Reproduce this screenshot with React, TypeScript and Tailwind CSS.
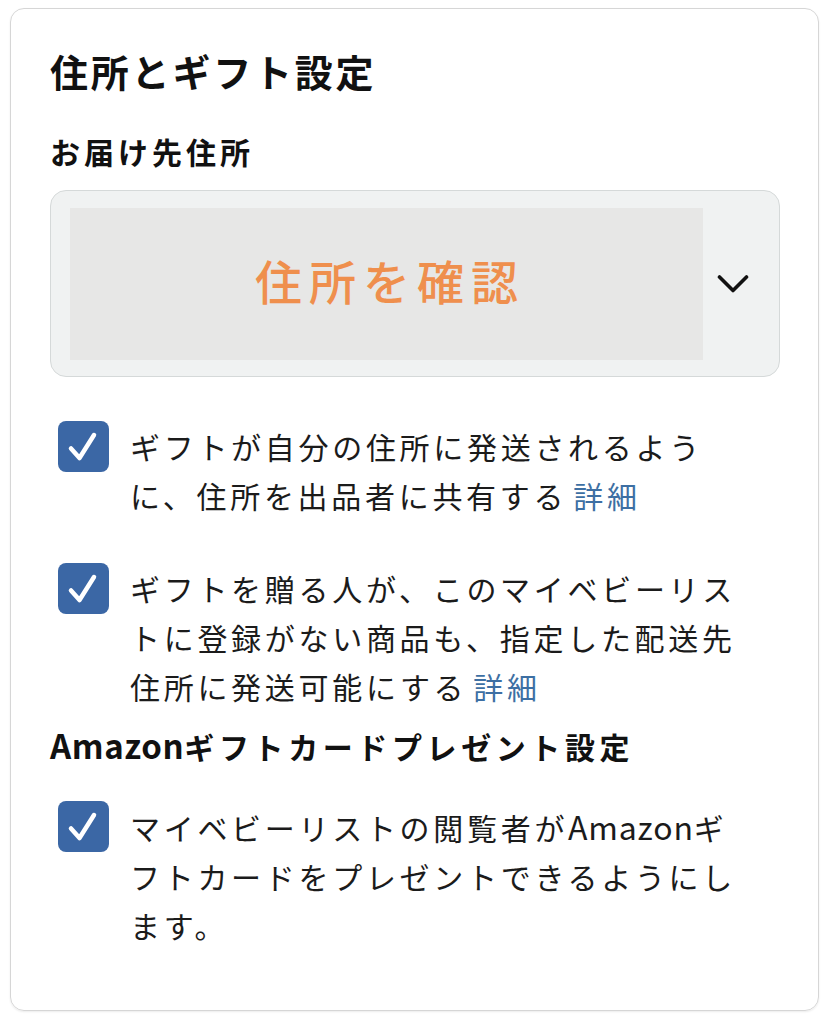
import React from "react";

const font = { fontFamily: '"Noto Sans CJK JP", "Noto Sans", sans-serif' };

function Check() {
  return (
    <div className="w-[51px] h-[51px] shrink-0 rounded-[8px] bg-[#3b67a5] flex items-center justify-center">
      <svg width="51" height="51" viewBox="0 0 51 51" fill="none">
        <path d="M13 27.5 L21.5 37 L36 14" stroke="white" strokeWidth="4.5" strokeLinecap="round" strokeLinejoin="round" />
      </svg>
    </div>
  );
}

function Item({ lines, link, className = "" }: { lines: React.ReactNode[]; link?: boolean; className?: string }) {
  return (
    <div className={"flex items-start ml-[8px] gap-[21px] " + className}>
      <Check />
      <div className="mt-[1px] text-[30px] leading-[49px] tracking-[3.7px] text-[#1b1b1b]">
        {lines.map((l, i) => (
          <div key={i} className="whitespace-nowrap">
            {l}
            {link && i === lines.length - 1 && (
              <span className="text-[#3d6fa3] ml-[6px]">詳細</span>
            )}
          </div>
        ))}
      </div>
    </div>
  );
}

export default function App() {
  return (
    <div className="w-[831px] h-[1024px] bg-white pt-[8px] pl-[10px] pr-[12px]" style={font}>
      <div className="h-[1003px] rounded-[14px] border border-[#d6d6d6] shadow-[0_1px_2px_rgba(0,0,0,0.08)] pl-[39px] pr-[38px] pt-[38px]">
        <div className="text-[38px] leading-[48px] font-bold tracking-[2.8px] text-[#111]">住所とギフト設定</div>
        <div className="mt-[36px] text-[30px] leading-[40px] font-bold tracking-[4px] text-[#111]">お届け先住所</div>
        <div className="mt-[19px] h-[187px] rounded-[16px] border border-[#d5d9d9] bg-[#f0f2f2] flex items-center pl-[19px] pr-[30px]">
          <div className="w-[633px] h-[152px] bg-[#e7e7e6] flex items-center justify-center pb-[6px]">
            <span className="text-[47px] font-medium tracking-[7px] text-[#ef8f4d] pl-[7px]">住所を確認</span>
          </div>
          <div className="flex-1 flex justify-end">
            <svg width="32" height="20" viewBox="0 0 32 20" fill="none">
              <path d="M2.5 3 L16 16.5 L29.5 3" stroke="#111" strokeWidth="3.6" strokeLinecap="round" strokeLinejoin="round" />
            </svg>
          </div>
        </div>
        <Item className="mt-[44px]" lines={["ギフトが自分の住所に発送されるよう", "に、住所を出品者に共有する"]} link />
        <Item className="mt-[43px]" lines={["ギフトを贈る人が、このマイベビーリス", "トに登録がない商品も、指定した配送先", "住所に発送可能にする"]} link />
        <div className="mt-[12px] text-[30px] leading-[44px] font-bold tracking-[4.6px] text-[#111] whitespace-nowrap">
          <span className="text-[33px] tracking-[0.6px]">Amazon</span>ギフトカードプレゼント設定
        </div>
        <Item
          className="mt-[33px]"
          lines={[
            <>マイベビーリストの閲覧者が<span className="text-[32px] tracking-[0.8px]">Amazon</span>ギ</>,
            "フトカードをプレゼントできるようにし",
            "ます。",
          ]}
        />
      </div>
    </div>
  );
}
